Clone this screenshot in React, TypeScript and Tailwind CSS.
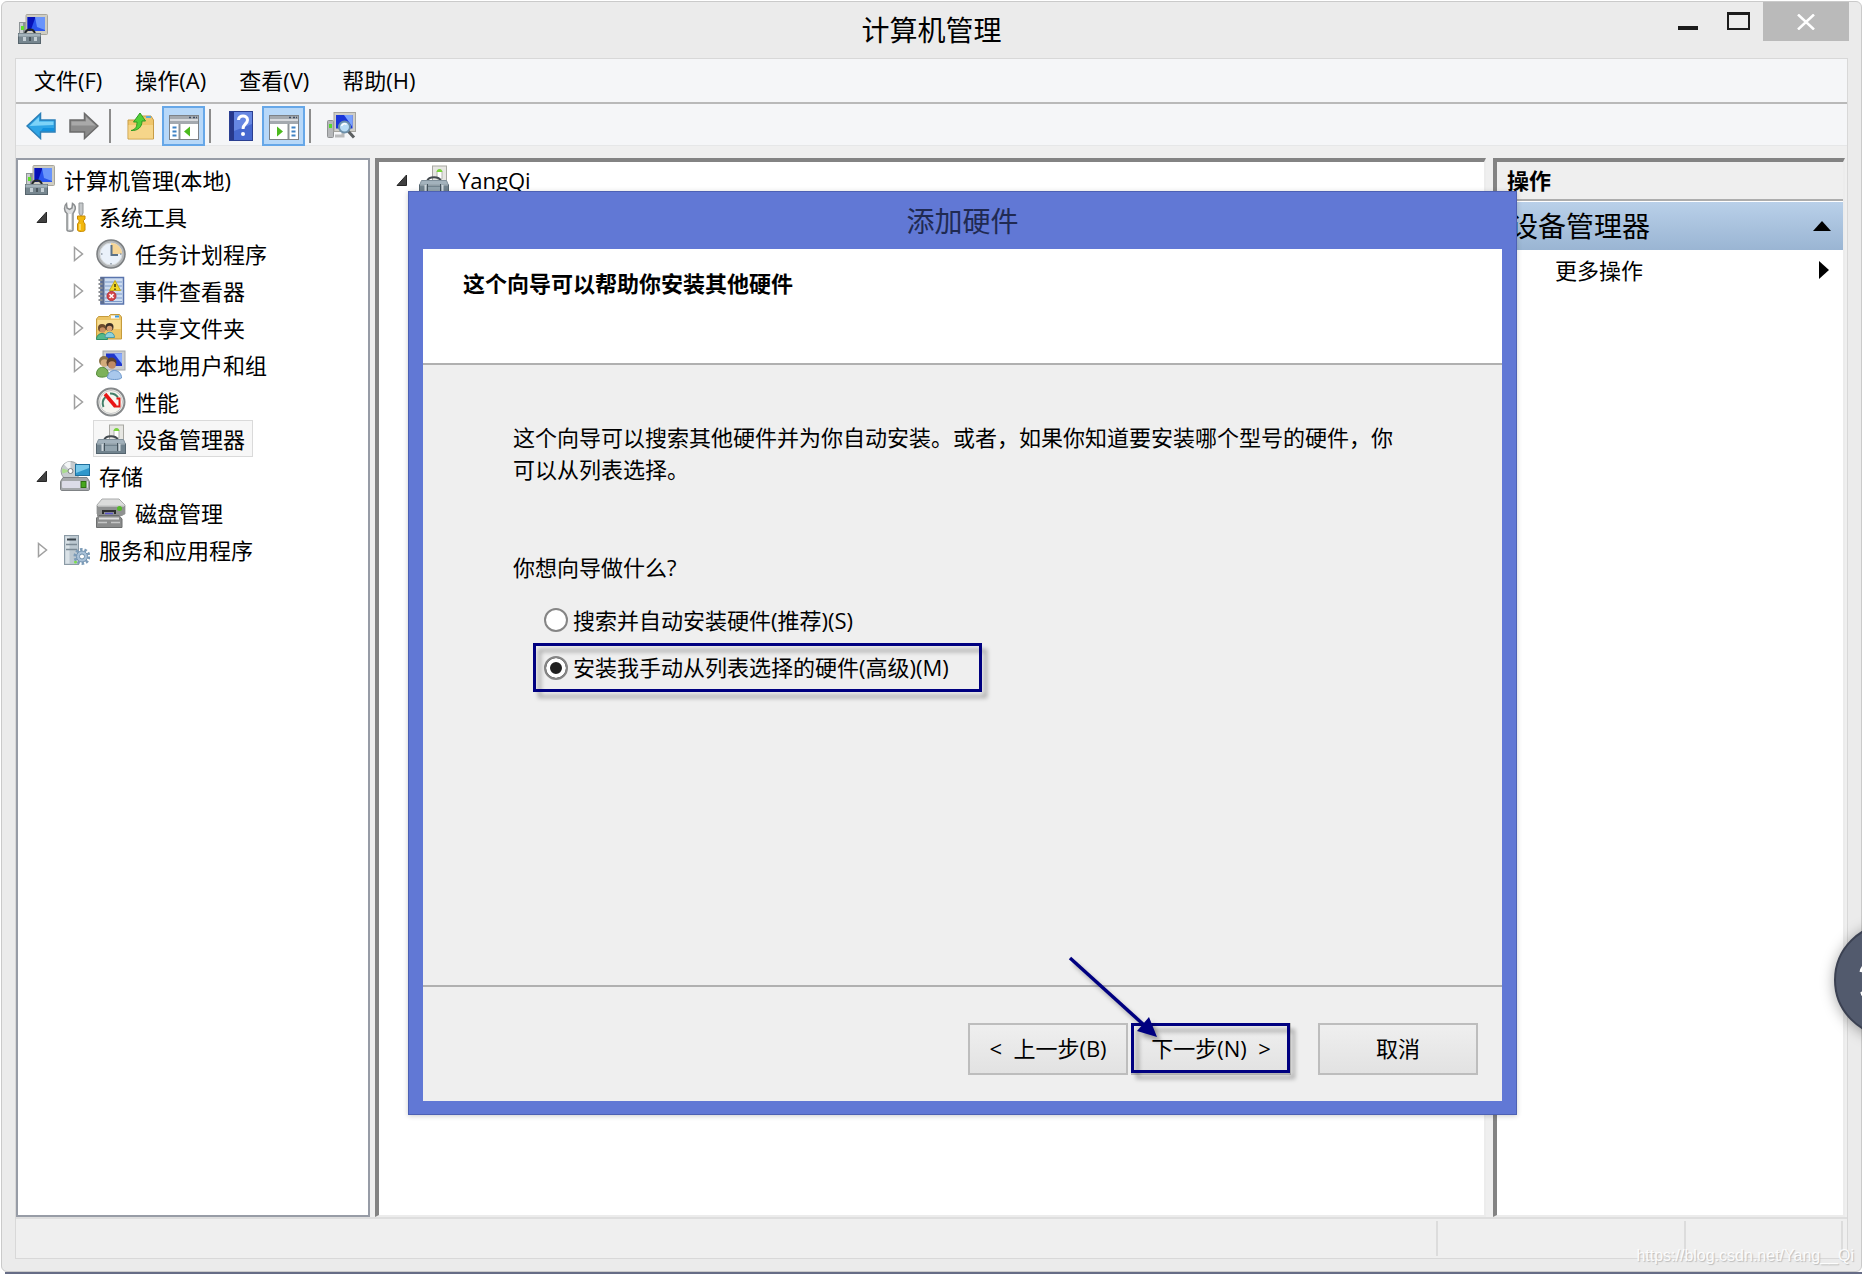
import React from "react";

interface IconProps {
  className?: string;
}

interface TreeItem {
  label: string;
  depth: number;
  icon: React.FC<IconProps>;
  state?: "open" | "closed";
  selected?: boolean;
}

const ComputerIcon: React.FC<IconProps> = ({ className }) => (
  <svg className={className} width="30" height="30" viewBox="0 0 30 30" aria-hidden="true">
    <rect x="1" y="8" width="8" height="12" fill="#8d9396" />
    <rect x="2" y="9" width="3" height="10" fill="#c9cdcf" />
    <rect x="3" y="12" width="3" height="4" fill="#5fe12a" />
    <rect x="8" y="0.5" width="21.5" height="20" rx="1" fill="#cfcdc2" stroke="#a8a69c" />
    <rect x="9.5" y="3" width="17.5" height="14" fill="#2a55ee" />
    <path d="M9.5 3h8l-5 14h-3z" fill="#0712b8" />
    <path d="M17 3h10v13l-8-3z" fill="#7fa9ff" opacity="0.75" />
    <path d="M7 20c1-6 9-6 10 0" fill="none" stroke="#23282b" strokeWidth="2" />
    <rect x="0.5" y="19.5" width="22" height="10" fill="#76868f" stroke="#56646c" />
    <rect x="0.5" y="19.5" width="22" height="3" fill="#a3b2ba" />
    <rect x="5" y="23" width="3" height="4" fill="#c3ced4" />
    <rect x="11" y="23" width="2" height="4" fill="#4a565d" />
    <rect x="16" y="23" width="3" height="4" fill="#c3ced4" />
  </svg>
);

const ToolsIcon: React.FC<IconProps> = ({ className }) => (
  <svg className={className} width="30" height="30" viewBox="0 0 30 30" aria-hidden="true">
    <path
      d="M6.500 1.500L7 6l2.500 1.500L12 6l.5-4.500C15 3 16 6 14.500 9L13 11.500V28c0 1.500-6 1.500-6 0V11.500C4 9.500 3.500 4 6.500 1.500z"
      fill="#dcdedf"
      stroke="#8b8e90"
      strokeWidth="1.500"
    />
    <path d="M10 12v15" stroke="#fff" strokeWidth="2" />
    <path d="M19 1h4v10l-1.500 3h-1L19 11z" fill="#c5c8ca" stroke="#909496" />
    <path
      d="M17.500 14h7.500v3l-1.500 1.500V20l1.500 2v6c0 2-7.500 2-7.500 0v-6l1.500-2v-1.500L17.500 17z"
      fill="#f2b70c"
      stroke="#c88a04"
    />
    <path d="M20 22v6" stroke="#ffe27a" strokeWidth="1.500" />
  </svg>
);

const ClockIcon: React.FC<IconProps> = ({ className }) => (
  <svg className={className} width="30" height="30" viewBox="0 0 30 30" aria-hidden="true">
    <circle cx="15" cy="15" r="14" fill="#b3b6b8" stroke="#7b7e80" strokeWidth="1.500" />
    <circle cx="15" cy="15" r="11" fill="#eaf1fa" stroke="#d9dcde" />
    <path d="M15 15V4a11 11 0 0 1 11 11z" fill="#f6d596" />
    <path d="M15.500 6v10H22" fill="none" stroke="#5c7288" strokeWidth="2" />
    <path d="M15 24v1.500M5 15h1.500M24 15h1.500" stroke="#8d99a5" strokeWidth="1.500" />
  </svg>
);

const EventIcon: React.FC<IconProps> = ({ className }) => (
  <svg className={className} width="30" height="30" viewBox="0 0 30 30" aria-hidden="true">
    <rect x="5" y="1.500" width="22.500" height="26.500" fill="#cddcf0" stroke="#5a74ad" strokeWidth="1.500" />
    <rect x="4.500" y="1" width="4" height="27" fill="#5c6d92" />
    <path d="M9 6h17M9 10h17M9 14h17M9 18h17M9 22h17M9 25.500h17" stroke="#7d9bcb" />
    <path d="M2.500 4h4M2.500 8h4M2.500 12h4M2.500 16h4M2.500 20h4M2.500 24h4" stroke="#8c8f93" strokeWidth="2" />
    <path d="M19 4.500l5.500 10h-11z" fill="#f0d826" stroke="#c4ac1d" />
    <path d="M19 8v3M19 12.500v1.500" stroke="#3b3305" strokeWidth="1.500" />
    <circle cx="15.500" cy="20" r="4.500" fill="#d4484b" stroke="#b23036" />
    <path d="M13.500 18l4 4m0-4l-4 4" stroke="#fff" strokeWidth="1.500" />
  </svg>
);

const SharedFolderIcon: React.FC<IconProps> = ({ className }) => (
  <svg className={className} width="30" height="30" viewBox="0 0 30 30" aria-hidden="true">
    <path d="M.5 6l2-2.500h10l2-2h9L25.500 4v22H.5z" fill="#ecc566" stroke="#c59b3c" />
    <path d="M15 2.500h8v3h-8z" fill="#f9fbfc" />
    <path d="M19 2.500h4v2h-4z" fill="#3b9ae0" />
    <path d="M1.500 7h23v9h-23z" fill="#f8de94" />
    <circle cx="6" cy="15" r="4" fill="#6b4a2c" />
    <circle cx="6.500" cy="17" r="2.800" fill="#c98f62" />
    <path d="M.5 26.500c0-8 11-8 11 0z" fill="#54b98b" stroke="#2f8e66" />
    <circle cx="13.500" cy="14" r="4" fill="#3c3027" />
    <circle cx="13.500" cy="15.500" r="2.800" fill="#d79f70" />
    <path d="M9 24.500c0-7 9.500-7 9.500 0z" fill="#8ed1dc" stroke="#4b9aa8" />
  </svg>
);

const UsersIcon: React.FC<IconProps> = ({ className }) => (
  <svg className={className} width="30" height="30" viewBox="0 0 30 30" aria-hidden="true">
    <rect x="7" y="1" width="22" height="19" fill="#cbcdd0" stroke="#a2a5a8" />
    <rect x="10" y="3.500" width="16" height="12.500" fill="#2036cc" />
    <path d="M18 3.500h8V14z" fill="#86aaff" />
    <circle cx="8" cy="11" r="5" fill="#8b7349" />
    <circle cx="8.500" cy="13" r="3.800" fill="#d3ac7c" />
    <path d="M.5 24c0-9 12-9 12 1-3 3-12 3-12-1z" fill="#7db25a" stroke="#568c3b" />
    <circle cx="15.500" cy="12.500" r="5" fill="#5c402c" />
    <circle cx="16" cy="15" r="3.800" fill="#c08a64" />
    <path d="M11.500 28c0-10 14-10 14 0-2 2-12 2-14 0z" fill="#a9c8ec" stroke="#6d98cb" />
  </svg>
);

const GaugeIcon: React.FC<IconProps> = ({ className }) => (
  <svg className={className} width="30" height="30" viewBox="0 0 30 30" aria-hidden="true">
    <circle cx="15" cy="15" r="13.500" fill="#f7f6f0" stroke="#85888a" strokeWidth="2" />
    <circle cx="15" cy="15" r="11.500" fill="none" stroke="#c5c7c8" />
    <path d="M7.500 20a9 9 0 0 1 2-10" fill="none" stroke="#43806a" strokeWidth="2" />
    <path d="M14 6.500a9 9 0 0 1 8 4" fill="none" stroke="#43806a" strokeWidth="2" />
    <path d="M9 7l10.500 12.500" stroke="#ea1414" strokeWidth="3.500" />
    <path d="M20.500 11.500h3v8h-5" fill="none" stroke="#e21a14" strokeWidth="2" />
  </svg>
);

const DeviceIcon: React.FC<IconProps> = ({ className }) => (
  <svg className={className} width="30" height="30" viewBox="0 0 30 30" aria-hidden="true">
    <rect x="13.500" y="1" width="14" height="16" fill="#e6e6e2" stroke="#a7a7a2" />
    <path d="M18 14V7c0-3 5-3 5 0v7z" fill="#fff" stroke="#b2b4b0" />
    <path d="M17.500 7c.5-4 5.500-4 6 0z" fill="#79d43b" />
    <path d="M8 16c2-5 12-5 14 0" fill="none" stroke="#434a4f" strokeWidth="2" />
    <path d="M2.500 15.500h25l2 5H.5z" fill="#a3b2bc" stroke="#80909b" />
    <rect x=".5" y="20" width="29" height="9.500" fill="#71838e" stroke="#55656f" />
    <path d="M1 20h28" stroke="#b9c5cc" />
    <path d="M6.500 20v7M23.500 20v7" stroke="#cdd6db" strokeWidth="2" />
    <path d="M8.500 19v8M21.500 19v8" stroke="#43515a" />
    <path d="M9 22h12v5H9z" fill="#93a4ae" />
  </svg>
);

const StorageIcon: React.FC<IconProps> = ({ className }) => (
  <svg className={className} width="30" height="30" viewBox="0 0 30 30" aria-hidden="true">
    <circle cx="10.500" cy="10" r="9.500" fill="#c6cbce" stroke="#9a9fa2" />
    <path d="M10.500 10L4 3.500A9.500 9.500 0 0 1 10.500.5z" fill="#f4f6f7" />
    <path d="M10.500 10l-8 2.500a9 9 0 0 1 0-5z" fill="#a9dc8c" />
    <circle cx="10.500" cy="10" r="2.500" fill="#fff" stroke="#777c80" />
    <rect x="15.500" y="3.500" width="14" height="11" fill="#2f97cb" stroke="#1f6f9c" />
    <path d="M16 4h13v3l-13 5z" fill="#78c8ea" />
    <path d="M3 16.500h24l2.500 4v7.500c0 1-.5 1.500-1.500 1.500H2c-1 0-1.500-.5-1.500-1.500v-7.500z" fill="#a4a7aa" stroke="#7f8285" />
    <rect x="2" y="20" width="26" height="7" rx="1" fill="#dcdce8" />
    <rect x="21" y="20.500" width="5" height="6" fill="#46a71c" stroke="#2c6f10" />
  </svg>
);

const DiskIcon: React.FC<IconProps> = ({ className }) => (
  <svg className={className} width="30" height="30" viewBox="0 0 30 30" aria-hidden="true">
    <path d="M6 1h17l6 6v9H1V7z" fill="#dcdddc" stroke="#a9abab" />
    <path d="M1 8h28v8l-3 2H1z" fill="#8f9191" />
    <path d="M2 8h26" stroke="#c9caca" strokeWidth="1.500" />
    <circle cx="23.500" cy="10.500" r="2.500" fill="#57b92c" />
    <path d="M7 16v-3h12v3" fill="none" stroke="#2e2f30" strokeWidth="2" />
    <path d="M9 15.500h8" stroke="#5b55c9" strokeWidth="1.500" />
    <path d="M3 17.500h20l3 3.500v8.500H.5V20z" fill="#8b8c8c" stroke="#6c6e6e" />
    <path d="M3 20.500h20" stroke="#dcdddd" strokeWidth="2" />
    <path d="M2 24.500h9m4 0h9" stroke="#c5c6c6" strokeWidth="1.500" />
  </svg>
);

const ServicesIcon: React.FC<IconProps> = ({ className }) => (
  <svg className={className} width="30" height="30" viewBox="0 0 30 30" aria-hidden="true">
    <rect x="4.500" y=".5" width="14" height="29" fill="#bcc8d0" stroke="#8b9aa5" />
    <rect x="5.500" y="1.500" width="4" height="27" fill="#dae2e7" />
    <path d="M7 4.500h9" stroke="#39434a" strokeWidth="2" />
    <path d="M6 9.500h11M6 14.500h11" stroke="#7c8a94" strokeWidth="1.500" />
    <circle cx="15.500" cy="27" r="1.500" fill="#7be04d" />
    <circle cx="22" cy="21.500" r="7" fill="none" stroke="#7d9cb8" strokeWidth="3" strokeDasharray="2.500 1.900" />
    <circle cx="22" cy="21.500" r="5.500" fill="#a8c1d8" stroke="#7393b0" />
    <circle cx="22" cy="21.500" r="2.500" fill="#fff" stroke="#6f8faa" />
  </svg>
);

const ArrowIcon: React.FC<{ back?: boolean }> = ({ back }) => (
  <svg width="30" height="28" viewBox="0 0 30 28" aria-hidden="true">
    {back ? (
      <>
        <path d="M1 14L14.500 1.500V8H29v12H14.500v6.500z" fill="#2fa5e6" stroke="#2b7fb8" strokeWidth="1.500" />
        <path d="M3.500 14L13 5v4.500h14.500V13z" fill="#7dd3f8" />
        <path d="M17 16h11v3H15z" fill="#1291de" />
      </>
    ) : (
      <>
        <path d="M29 14L15.500 1.500V8H1v12h14.500v6.500z" fill="#8b8b8b" stroke="#6b6b6b" strokeWidth="1.500" />
        <path d="M26.500 13.500L17 5v4.500H2.500v4z" fill="#a9a9a9" />
      </>
    )}
  </svg>
);

const FolderUpIcon = () => (
  <svg width="28" height="28" viewBox="0 0 28 28" aria-hidden="true">
    <path d="M1 8h12l2-4h9l2.500 4v19H1z" fill="#efc66c" stroke="#c79c45" />
    <path d="M1.500 13h24.500v13.500H1.500z" fill="#f6d68a" />
    <path d="M19 5h5" stroke="#5aa9d8" strokeWidth="2" />
    <path
      d="M4 18.500c5-1 6-4 6-8.500H6.500L13 1l5.500 8H15c0 6-4 10-11 9.500z"
      fill="#50cf38"
      stroke="#2f9a22"
    />
  </svg>
);

const PaneIcon: React.FC<{ right?: boolean }> = ({ right }) => (
  <svg width="30" height="26" viewBox="0 0 30 26" aria-hidden="true">
    <rect x=".5" y=".5" width="29" height="24" fill="#fff" stroke="#7d8186" />
    <rect x="1" y="1" width="28" height="8" fill="#a4a9af" />
    <path d="M1 5h28" stroke="#e8eaec" strokeWidth="1.500" />
    <path d="M20 2.500h2m2 0h2m1 0h1" stroke="#3b4b63" strokeWidth="1.500" />
    <path d={right ? "M19.500 9v15" : "M10.500 9v15"} stroke="#8f9499" strokeWidth="2" />
    <path d={right ? "M22.500 12.500h4m-4 4h4m-4 4h4" : "M3.500 12.500h4m-4 4h4m-4 4h4"} stroke="#3f82c4" strokeWidth="2" />
    <path d={right ? "M8 11.500l6 5-6 5z" : "M21 11.500l-6 5 6 5z"} fill="#4cba1d" />
  </svg>
);

const HelpIcon = () => (
  <svg width="24" height="30" viewBox="0 0 24 30" aria-hidden="true">
    <rect x=".5" y=".5" width="23" height="29" fill="#4668cf" stroke="#2b3f91" />
    <rect x="1" y="1" width="4" height="28" fill="#27388b" />
    <path d="M5 1h18v12L5 20z" fill="#6687e2" />
    <path d="M9.500 9c0-5.500 9-5.500 9 0 0 4-4.500 4-4.500 9" fill="none" stroke="#fff" strokeWidth="3" />
    <circle cx="14" cy="23" r="2" fill="#fff" />
  </svg>
);

const ScanIcon = () => (
  <svg width="30" height="28" viewBox="0 0 30 28" aria-hidden="true">
    <rect x="1.500" y="8.500" width="6" height="17" rx="1" fill="#b6b8ba" stroke="#909294" />
    <rect x="3" y="12" width="3" height="4" fill="#54da2e" />
    <rect x="8" y=".5" width="21.500" height="19" fill="#cfcec8" stroke="#a5a49e" />
    <rect x="10" y="3" width="16.500" height="13.500" fill="#1a35d8" />
    <path d="M18 3h8.500v12z" fill="#79a2ff" />
    <path d="M9 24h8v-3" fill="none" stroke="#b9babb" strokeWidth="3" />
    <path d="M22 19l6 6.500" stroke="#5c5f61" strokeWidth="3" />
    <circle cx="18.500" cy="15" r="5.500" fill="#b9dcf5" stroke="#6c8fa9" strokeWidth="2" />
    <path d="M15.500 14c1-2.500 4-3 5-1.500" fill="none" stroke="#fff" strokeWidth="1.500" />
  </svg>
);

const Expander: React.FC<{ state?: "open" | "closed" }> = ({ state }) => (
  <svg width="28" height="16" viewBox="0 0 28 16" aria-hidden="true">
    {state === "open" && <path d="M17.500 3v10.500H8z" fill="#404040" stroke="#262626" />}
    {state === "closed" && <path d="M9.500 1.500v13l8-6.500z" fill="#fff" stroke="#a0a0a0" strokeWidth="1.500" />}
  </svg>
);

const menus = ["文件(F)", "操作(A)", "查看(V)", "帮助(H)"];

const tree: TreeItem[] = [
  { label: "计算机管理(本地)", depth: 0, icon: ComputerIcon },
  { label: "系统工具", depth: 1, icon: ToolsIcon, state: "open" },
  { label: "任务计划程序", depth: 2, icon: ClockIcon, state: "closed" },
  { label: "事件查看器", depth: 2, icon: EventIcon, state: "closed" },
  { label: "共享文件夹", depth: 2, icon: SharedFolderIcon, state: "closed" },
  { label: "本地用户和组", depth: 2, icon: UsersIcon, state: "closed" },
  { label: "性能", depth: 2, icon: GaugeIcon, state: "closed" },
  { label: "设备管理器", depth: 2, icon: DeviceIcon, selected: true },
  { label: "存储", depth: 1, icon: StorageIcon, state: "open" },
  { label: "磁盘管理", depth: 2, icon: DiskIcon },
  { label: "服务和应用程序", depth: 1, icon: ServicesIcon, state: "closed" },
];

const indent = ["pl-1", "pl-[11px]", "pl-[47px]"];

const TitleBar = () => (
  <header className="grid grid-cols-[1fr_auto_1fr] h-14">
    <ComputerIcon className="ml-4 mt-3" />
    <h1 className="self-center text-[28px] leading-8">计算机管理</h1>
    <div className="flex items-start justify-end pr-3">
      <button className="flex w-[50px] h-[39px] justify-center" aria-label="最小化">
        <span className="mt-6 w-5 h-1 bg-[#1b1b1b]" />
      </button>
      <button className="flex w-[50px] h-[39px] justify-center" aria-label="最大化">
        <span className="mt-[10px] w-[23px] h-[18px] border-2 border-t-[3px] border-[#1b1b1b]" />
      </button>
      <button className="flex w-[86px] h-[39px] items-center justify-center bg-[#bababa]" aria-label="关闭">
        <svg width="18" height="16" viewBox="0 0 18 16" aria-hidden="true">
          <path d="M1 .5l16 15M17 .5l-16 15" stroke="#fff" strokeWidth="2.500" />
        </svg>
      </button>
    </div>
  </header>
);

const Divider = () => <span className="ml-1 mr-2 w-[2px] h-[34px] bg-[#8c8c8c]" />;

const ToolButton: React.FC<{ label: string; active?: boolean; children: React.ReactNode }> = ({
  label,
  active,
  children,
}) => (
  <button
    aria-label={label}
    className={
      active
        ? "flex w-[43px] h-10 pt-[5px] items-center justify-center border-2 border-[#66a7e8] bg-[#b8d8f8]"
        : "flex w-[43px] h-10 items-center justify-center"
    }
  >
    {children}
  </button>
);

const Toolbar = () => (
  <div className="flex items-center h-[42px] pt-[2px] pl-[3px] bg-[#f5f6f8] border-b border-[#e6e7e8]">
    <ToolButton label="后退">
      <ArrowIcon back />
    </ToolButton>
    <ToolButton label="前进">
      <ArrowIcon />
    </ToolButton>
    <Divider />
    <ToolButton label="上一级">
      <FolderUpIcon />
    </ToolButton>
    <ToolButton label="显示控制台树" active>
      <PaneIcon />
    </ToolButton>
    <Divider />
    <ToolButton label="帮助">
      <HelpIcon />
    </ToolButton>
    <ToolButton label="显示操作窗格" active>
      <PaneIcon right />
    </ToolButton>
    <Divider />
    <ToolButton label="扫描检测硬件改动">
      <ScanIcon />
    </ToolButton>
  </div>
);

const TreePane = () => (
  <nav className="w-[354px] shrink-0 pt-px bg-white border-2 border-[#979ca6]">
    <ul>
      {tree.map(({ label, depth, icon: Icon, state, selected }) => (
        <li key={label} className={`flex items-center h-[37px] ${indent[depth]}`}>
          {depth > 0 && <Expander state={state} />}
          <button
            className={`flex items-center gap-[9px] h-[37px] pl-[2px] pr-[7px] border leading-8 ${
              selected ? "border-[#dadada] bg-[#f7f7f7]" : "border-transparent"
            }`}
          >
            <Icon />
            {label}
          </button>
        </li>
      ))}
    </ul>
  </nav>
);

const ActionsPane = () => (
  <aside className="w-[352px] shrink-0 mr-[2px] bg-white border-t-4 border-l-4 border-r-2 border-b-2 border-t-[#838383] border-l-[#838383] border-r-[#ececec] border-b-[#ececec]">
    <h2 className="h-[39px] pl-[10px] bg-[#efefef] border-b-2 border-[#adadad] leading-9 font-bold">
      操作
    </h2>
    <button className="flex items-center justify-between w-full h-[48px] mt-px pl-[13px] pr-3 bg-linear-to-b from-[#b9d0e9] to-[#9ab5d3] text-[28px] leading-8">
      设备管理器
      <svg width="18" height="10" viewBox="0 0 18 10" aria-hidden="true">
        <path d="M9 0l9 10H0z" />
      </svg>
    </button>
    <button className="flex items-center justify-between w-full h-10 pl-[58px] pr-[14px]">
      更多操作
      <svg width="10" height="18" viewBox="0 0 10 18" aria-hidden="true">
        <path d="M0 0l10 9-10 9z" />
      </svg>
    </button>
  </aside>
);

const radioClass =
  "appearance-none size-6 rounded-full border-2 border-[#858585] bg-white checked:bg-[#202020] checked:shadow-[inset_0_0_0_4px_white]";

const buttonClass =
  "w-40 h-[52px] pb-[2px] border-2 border-[#bdbdbd] bg-linear-to-b from-[#efefef] to-[#e2e2e2] whitespace-pre";

const highlightClass =
  "absolute inset-0 border-[3px] border-[#000080] drop-shadow-[5px_6px_2px_rgba(0,0,0,0.3)] pointer-events-none";

const AddHardwareDialog = () => (
  <section
    role="dialog"
    aria-labelledby="dialog-title"
    className="absolute left-[408px] right-[345px] top-[191px] bottom-[159px] flex flex-col px-[14px] pb-[13px] bg-[#6178d5] border border-[#4d61b4] shadow-[0_1px_5px_rgba(0,0,0,0.2)]"
  >
    <h2 id="dialog-title" className="h-[57px] pt-[13px] text-center text-[28px] leading-8 text-[#202a52]">
      添加硬件
    </h2>
    <div className="flex flex-col flex-1 bg-[#efefef]">
      <div className="h-[116px] pt-[18px] pl-10 bg-white border-b-2 border-[#b0b0b0]">
        <h3 className="leading-8 font-bold">这个向导可以帮助你安装其他硬件</h3>
      </div>
      <form className="flex-1 pt-14 pl-[90px]">
        <p className="max-w-[900px] leading-8">
          这个向导可以搜索其他硬件并为你自动安装。或者，如果你知道要安装哪个型号的硬件，你可以从列表选择。
        </p>
        <fieldset className="mt-[66px]">
          <legend className="leading-8">你想向导做什么?</legend>
          <div className="flex flex-col items-start pt-[14px] pl-5">
            <label className="flex items-center gap-[5px] h-[46px] pl-[11px]">
              <input type="radio" name="mode" className={radioClass} />
              搜索并自动安装硬件(推荐)(S)
            </label>
            <label className="relative flex items-center gap-[5px] h-[49px] pl-[11px] pr-[33px]">
              <input type="radio" name="mode" defaultChecked className={radioClass} />
              安装我手动从列表选择的硬件(高级)(M)
              <span className={highlightClass} />
            </label>
          </div>
        </fieldset>
      </form>
      <div className="flex justify-end pt-9 pb-[26px] pr-6 border-t-2 border-[#b0b0b0]">
        <button className={buttonClass}>{"<  上一步(B)"}</button>
        <div className="relative ml-[3px] mr-[27px]">
          <button className={`${buttonClass} border-[#5aaaf5]`}>{"下一步(N)  >"}</button>
          <span className={`${highlightClass} mb-[2px] mr-px`} />
          <svg
            className="absolute -left-16 -top-[68px] drop-shadow-[4px_5px_2px_rgba(0,0,0,0.3)] pointer-events-none"
            width="96"
            height="88"
            viewBox="0 0 96 88"
            aria-hidden="true"
          >
            <path d="M3 3l74 67" stroke="#000080" strokeWidth="3.500" />
            <path d="M90 82l-20-6 12-14z" fill="#000080" />
          </svg>
        </div>
        <button className={buttonClass}>取消</button>
      </div>
    </div>
  </section>
);

const App = () => {
  return (
    <div className="relative flex flex-col min-h-screen pt-px pl-px overflow-hidden bg-white text-black text-[22px] font-['Open_Sans','Noto_Sans_CJK_SC',sans-serif]">
      <main className="flex flex-col flex-1 rounded-md border border-[#cacaca] bg-[#ebebeb]">
        <TitleBar />
        <div className="flex flex-col flex-1 mx-[13px] mb-3 border border-[#d8d8d8] bg-[#efefef]">
          <div className="flex items-center gap-[33px] h-[45px] pb-[2px] pl-[18px] bg-[#f5f6f8] border-b-2 border-[#b9b9b9]">
            {menus.map((menu) => (
              <button key={menu} className="leading-8">
                {menu}
              </button>
            ))}
          </div>
          <Toolbar />
          <div className="flex flex-1 pt-3">
            <TreePane />
            <div className="flex-1 ml-[5px] mr-[7px] bg-white border-t-4 border-l-4 border-r-2 border-b-2 border-t-[#838383] border-l-[#838383] border-r-[#ececec] border-b-[#ececec]">
              <div className="flex items-center h-[35px] pl-[10px]">
                <Expander state="open" />
                <DeviceIcon className="ml-[2px]" />
                <span className="pl-[9px] leading-8">YangQi</span>
              </div>
            </div>
            <ActionsPane />
          </div>
          <footer className="flex justify-end h-[41px] pt-[2px] pb-[2px] border-t-2 border-[#dedede]">
            <span className="w-[248px] border-l-2 border-[#dcdcdc]" />
            <span className="w-[159px] mr-1 border-x-2 border-[#dcdcdc]" />
          </footer>
        </div>
      </main>
      <div className="h-[2px] ml-1 bg-[#666c86]" />

      <AddHardwareDialog />

      <button
        aria-label="录制"
        className="absolute -right-[86px] top-[923px] size-[114px] rounded-full border-2 border-[#3b4152] bg-[#525a6d] shadow-[0_2px_14px_rgba(0,0,0,0.35)]"
      >
        <svg className="ml-[23px]" width="24" height="40" viewBox="0 0 24 40" aria-hidden="true">
          <path d="M2 12c1-5 4-8 9-9M2 34c3-2 6-6 8-10M2 34h10" fill="none" stroke="#fff" strokeWidth="3" />
        </svg>
      </button>

      <p className="absolute right-2 bottom-2 text-base leading-5 text-white/90 font-['Liberation_Sans',sans-serif] [text-shadow:1px_1px_1px_#bbb]">
        https://blog.csdn.net/Yang__Qi
      </p>
    </div>
  );
};

export default App;
